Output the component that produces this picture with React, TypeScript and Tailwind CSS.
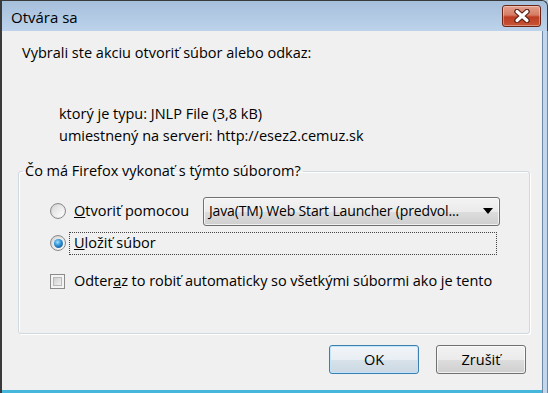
import React from "react";

const font = { fontFamily: '"Open Sans", "Noto Sans", sans-serif' };

function Radio({ checked }: { checked?: boolean }) {
  return (
    <div className="w-[16px] h-[16px] rounded-full border border-[#8b8b8b] bg-[linear-gradient(135deg,#cfcfcf,#f6f6f6)] flex items-center justify-center shrink-0">
      <div className="w-[12px] h-[12px] rounded-full bg-[linear-gradient(135deg,#d9d9d9,#ffffff)] flex items-center justify-center">
        {checked && (
          <div className="w-[9px] h-[9px] rounded-full bg-[radial-gradient(circle_at_40%_35%,#9fe0ff_0%,#2a8ed4_45%,#0b3f73_100%)]" />
        )}
      </div>
    </div>
  );
}

function Checkbox() {
  return (
    <div className="w-[15px] h-[15px] border border-[#8b8b8b] bg-[#f4f4f4] p-[2px] shrink-0">
      <div className="w-full h-full bg-[linear-gradient(135deg,#cfcfcf,#f2f2f2)] border border-[#b8b8b8]" />
    </div>
  );
}

export default function App() {
  return (
    <div
      className="w-[548px] h-[393px] flex flex-col bg-[#b5cce5] text-black overflow-hidden"
      style={font}
    >
      {/* Title bar */}
      <div className="h-[31px] shrink-0 flex items-center justify-between pl-[9px] pr-[6px] border-l-2 border-t border-[#3a3a3a] rounded-tr-[6px] border-r bg-[linear-gradient(to_bottom,#a6bfdb,#bcd3eb)]">
        <span className="text-[15px] leading-none mt-[2px]">Otvára sa</span>
        <div className="w-[39px] h-[22px] mt-[-1px] rounded-[3px] border border-[#6b2416] bg-[linear-gradient(to_bottom,#e3a08e_0%,#d67c64_45%,#bd3d22_55%,#c85535_100%)] flex items-center justify-center shadow-[inset_0_0_0_1px_rgba(255,255,255,0.35)]">
          <svg width="18" height="14" viewBox="0 0 18 14">
            <path d="M4 2.5 L14 11.5 M14 2.5 L4 11.5" stroke="#5a1f14" strokeWidth="5.5" strokeLinecap="round" />
            <path d="M4 2.5 L14 11.5 M14 2.5 L4 11.5" stroke="#ffffff" strokeWidth="3.2" strokeLinecap="round" />
          </svg>
        </div>
      </div>

      {/* Body */}
      <div className="flex-1 flex border-l-2 border-[#3a3a3a]">
        <div className="flex-1 bg-[#f0f0f0] border-b-[3px] border-[#45b6dc] flex flex-col pt-[12px] text-[14.5px]">
          <div className="pl-[20px] leading-[20px]">Vybrali ste akciu otvoriť súbor alebo odkaz:</div>
          <div className="pl-[57px] mt-[40px] leading-[22px]">
            <div>ktorý je typu: JNLP File (3,8 kB)</div>
            <div>umiestnený na serveri: http://esez2.cemuz.sk</div>
          </div>

          <fieldset className="ml-[16px] mr-[12px] mt-[14px] h-[173px] border border-[#d0d9df] rounded-[3px] shadow-[inset_1px_1px_0_#ffffff,1px_1px_0_#ffffff] px-0 pb-0">
            <legend className="ml-[4px] px-[2px] leading-[20px]">Čo má Firefox vykonať s týmto súborom?</legend>
            <div className="flex flex-col pl-[31px] pt-[15px]">
              <div className="h-[30px] flex items-center">
                <Radio />
                <span className="ml-[8px] w-[129px] leading-[20px] whitespace-nowrap">
                  <span className="underline">O</span>tvoriť pomocou
                </span>
                <div className="w-[297px] h-[29px] rounded-[3px] border border-[#707070] bg-[linear-gradient(to_bottom,#f3f3f3_0%,#ebebeb_50%,#dddddd_50%,#cfcfcf_100%)] flex items-center justify-between pl-[5px] pr-[6px] shadow-[inset_0_0_0_1px_rgba(255,255,255,0.7)]">
                  <span className="leading-[20px] whitespace-nowrap text-[14px] tracking-[-0.15px]">Java(TM) Web Start Launcher (predvol...</span>
                  <svg width="10" height="6" viewBox="0 0 10 6">
                    <path d="M0 0 H10 L5 6 Z" fill="#000" />
                  </svg>
                </div>
              </div>
              <div className="h-[24px] mt-[5px] flex items-center">
                <Radio checked />
                <div className="ml-[3px] w-[428px] h-[23px] border border-dotted border-[#444] flex items-center pl-[4px] leading-[20px]">
                  <span>
                    <span className="underline">U</span>ložiť súbor
                  </span>
                </div>
              </div>
              <div className="h-[20px] mt-[16px] flex items-center">
                <Checkbox />
                <span className="ml-[9px] leading-[20px] whitespace-nowrap tracking-[-0.05px]">
                  Odter<span className="underline">a</span>z to robiť automaticky so všetkými súbormi ako je tento
                </span>
              </div>
            </div>
          </fieldset>

          <div className="flex justify-end gap-[17px] pr-[16px] mt-[11px]">
            <div className="w-[90px] h-[29px] rounded-[3px] border border-[#3c7fb1] bg-[linear-gradient(to_bottom,#f2f5f8_0%,#e8eef3_50%,#d8e2ea_50%,#cbd8e3_100%)] shadow-[inset_0_0_0_1px_rgba(190,230,253,0.9)] flex items-center justify-center">
              OK
            </div>
            <div className="w-[90px] h-[29px] rounded-[3px] border border-[#707070] bg-[linear-gradient(to_bottom,#f2f2f2_0%,#ebebeb_50%,#dddddd_50%,#cfcfcf_100%)] shadow-[inset_0_0_0_1px_rgba(255,255,255,0.7)] flex items-center justify-center">
              Zrušiť
            </div>
          </div>
        </div>
        <div className="w-[6px] shrink-0 border-l border-r border-[#6f8aa6] bg-[#c2d6ec]" />
      </div>
    </div>
  );
}
